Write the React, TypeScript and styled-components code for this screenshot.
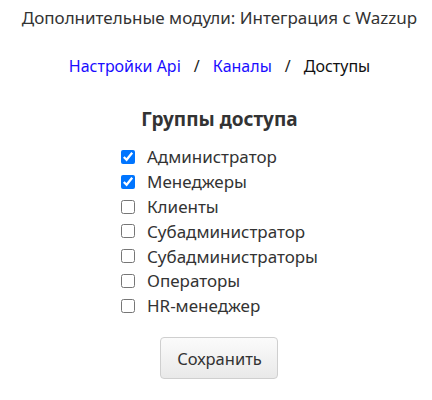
import styled, { createGlobalStyle } from 'styled-components';

const GlobalStyle = createGlobalStyle`
  body {
    margin: 0;
    background: #ffffff;
    font-family: 'Noto Sans', 'Open Sans', sans-serif;
    color: #333333;
  }
`;

const Page = styled.div`
  display: flex;
  flex-direction: column;
  align-items: center;
  width: 432px;
  box-sizing: border-box;
  padding: 6px 0 0 7px;
`;

const Title = styled.h1`
  margin: 0;
  font-size: 17px;
  font-weight: 400;
  line-height: 24px;
  color: #333333;
`;

const Breadcrumbs = styled.nav`
  display: flex;
  align-items: center;
  gap: 13px;
  margin-top: 26px;
  font-size: 16px;
  line-height: 20px;
`;

const Crumb = styled.a<{ active?: boolean }>`
  color: ${(props) => (props.active ? '#111111' : '#1a0dff')};
  text-decoration: none;
`;

const Slash = styled.span`
  color: #222222;
`;

const Groups = styled.section`
  display: flex;
  flex-direction: column;
  align-items: center;
  margin-top: 31px;
`;

const GroupsTitle = styled.h2`
  margin: 0 0 13.6px;
  font-size: 19px;
  font-weight: 700;
  line-height: 24px;
  color: #333333;
`;

const List = styled.ul`
  list-style: none;
  margin: 0;
  padding: 0;
  display: flex;
  flex-direction: column;
  align-items: flex-start;
`;

const Item = styled.li`
  display: flex;
  align-items: center;
  gap: 12px;
  height: 24.8px;
  font-size: 17px;
  color: #333333;
`;

const Check = styled.input`
  width: 14px;
  height: 14px;
  margin: 0;
`;

const SaveButton = styled.button`
  margin-top: 19px;
  width: 118px;
  height: 42px;
  border: 1px solid #cfcfcf;
  border-radius: 4px;
  background: linear-gradient(#fbfbfb, #e9e9e9);
  font-family: inherit;
  font-size: 16.5px;
  color: #333333;
  cursor: pointer;
`;

const groups = [
  { name: 'Администратор', checked: true },
  { name: 'Менеджеры', checked: true },
  { name: 'Клиенты', checked: false },
  { name: 'Субадминистратор', checked: false },
  { name: 'Субадминистраторы', checked: false },
  { name: 'Операторы', checked: false },
  { name: 'HR-менеджер', checked: false },
];

function App() {
  return (
    <>
      <GlobalStyle />
      <Page>
        <Title>Дополнительные модули: Интеграция с Wazzup</Title>
        <Breadcrumbs>
          <Crumb href="#">Настройки Api</Crumb>
          <Slash>/</Slash>
          <Crumb href="#">Каналы</Crumb>
          <Slash>/</Slash>
          <Crumb active>Доступы</Crumb>
        </Breadcrumbs>
        <Groups>
          <GroupsTitle>Группы доступа</GroupsTitle>
          <List>
            {groups.map((group) => (
              <Item key={group.name}>
                <Check type="checkbox" defaultChecked={group.checked} />
                {group.name}
              </Item>
            ))}
          </List>
          <SaveButton>Сохранить</SaveButton>
        </Groups>
      </Page>
    </>
  );
}

export default App;
